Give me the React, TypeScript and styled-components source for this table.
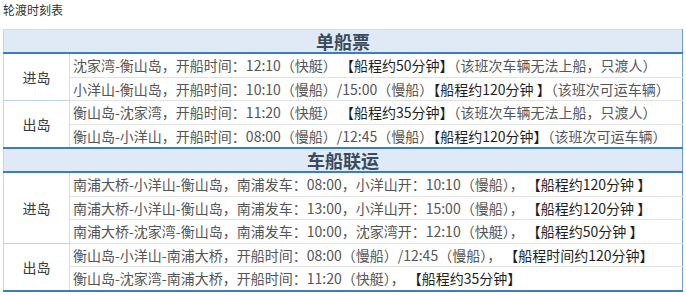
import * as React from 'react';
import styled, {createGlobalStyle} from 'styled-components';

const GlobalStyle = createGlobalStyle`
  body {
    margin: 0;
    background: #fff;
    font-family: "Noto Sans CJK SC", "Noto Sans", sans-serif;
  }
`;

const blue = '#3b7dbd';

const Page = styled.div`
  padding: 0 3px;
`;

const Title = styled.div`
  font-size: 12px;
  line-height: 16px;
  color: #333;
  padding-top: 2px;
  margin-bottom: 11px;
`;

const Table = styled.table`
  width: 680px;
  border-collapse: collapse;
  border-top: 1px solid #d9d9d9;
  border-left: 1px solid #d3d3d3;
  border-right: 1px solid #6f9fd2;
  border-bottom: 2px solid ${blue};
  font-size: 14px;
`;

const HeadCell = styled.td<{first?: boolean}>`
  background: #dfeaf6;
  height: 22px;
  padding: 0;
  text-align: center;
  font-size: 18px;
  font-weight: bold;
  line-height: 22px;
  color: #3c4b5b;
  border-bottom: 2px solid ${blue};
  ${(props: any) => !props.first && `border-top: 2px solid ${blue};`}
`;

const LabelCell = styled.td<{last?: boolean}>`
  width: 65px;
  padding: 0;
  text-align: center;
  color: #3a3a3a;
  border-right: 1px solid #dcdcdc;
  border-bottom: 1px solid ${(props: any) => props.last ? blue : '#bed3ea'};
`;

const TextCell = styled.td`
  height: 22.5px;
  padding: 0 3px;
  line-height: 22px;
  color: #555;
  white-space: nowrap;
  border-bottom: 1px solid #e2e2e2;
`;

const Note = styled.span`
  color: #1e1e1e;
`;

type Line = {text: string; note: string; tail?: string};
type Group = {label: string; lines: Line[]};
type Section = {title: string; groups: Group[]};

const sections: Section[] = [
  {
    title: '单船票',
    groups: [
      {
        label: '进岛',
        lines: [
          {text: '沈家湾-衡山岛，开船时间：12:10（快艇） ', note: '【船程约50分钟】', tail: '（该班次车辆无法上船，只渡人）'},
          {text: '小洋山-衡山岛，开船时间：10:10（慢船）/15:00（慢船）', note: '【船程约120分钟 】', tail: '（该班次可运车辆）'},
        ],
      },
      {
        label: '出岛',
        lines: [
          {text: '衡山岛-沈家湾，开船时间：11:20（快艇） ', note: '【船程约35分钟】', tail: '（该班次车辆无法上船，只渡人）'},
          {text: '衡山岛-小洋山，开船时间：08:00（慢船）/12:45（慢船）', note: '【船程约120分钟】', tail: '（该班次可运车辆）'},
        ],
      },
    ],
  },
  {
    title: '车船联运',
    groups: [
      {
        label: '进岛',
        lines: [
          {text: '南浦大桥-小洋山-衡山岛，南浦发车：08:00，小洋山开：10:10（慢船）， ', note: '【船程约120分钟 】'},
          {text: '南浦大桥-小洋山-衡山岛，南浦发车：13:00，小洋山开：15:00（慢船）， ', note: '【船程约120分钟 】'},
          {text: '南浦大桥-沈家湾-衡山岛，南浦发车：10:00，沈家湾开：12:10（快艇）， ', note: '【船程约50分钟 】'},
        ],
      },
      {
        label: '出岛',
        lines: [
          {text: '衡山岛-小洋山-南浦大桥，开船时间：08:00（慢船）/12:45（慢船）， ', note: '【船程时间约120分钟】'},
          {text: '衡山岛-沈家湾-南浦大桥，开船时间：11:20（快艇）， ', note: '【船程约35分钟】'},
        ],
      },
    ],
  },
];

export default function App() {
  return (
    <Page>
      <GlobalStyle/>
      <Title>轮渡时刻表</Title>
      <Table>
        {sections.map((s, si) => (
          <tbody key={s.title}>
            <tr>
              <HeadCell colSpan={2} first={si === 0}>{s.title}</HeadCell>
            </tr>
            {s.groups.map((g, gi) => g.lines.map((l, li) => (
              <tr key={`${gi}-${li}`}>
                {li === 0 && (
                  <LabelCell rowSpan={g.lines.length} last={gi === s.groups.length - 1}>{g.label}</LabelCell>
                )}
                <TextCell>
                  {l.text}<Note>{l.note}</Note>{l.tail}
                </TextCell>
              </tr>
            )))}
          </tbody>
        ))}
      </Table>
    </Page>
  );
}
